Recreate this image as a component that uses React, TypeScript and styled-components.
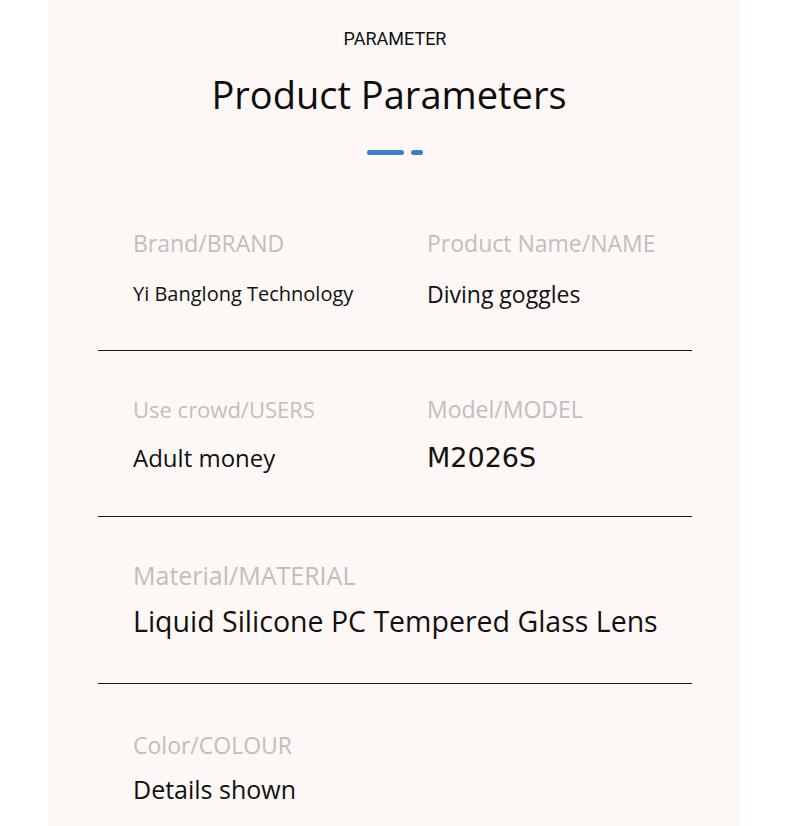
import React from 'react';
import styled, { createGlobalStyle } from 'styled-components';

const GlobalStyle = createGlobalStyle`
  html, body {
    margin: 0;
    padding: 0;
    background: #ffffff;
  }
  body {
    font-family: "Open Sans", "Noto Sans", sans-serif;
  }
`;

type Param = {
  label: string;
  value: string;
  labelSize: number;
  valueSize: number;
  mono?: boolean;
};

type Row = {
  items: Param[];
  height: number;
  labelTop: number;
  valueGap: number;
};

const rows: Row[] = [
  {
    items: [
      { label: 'Brand/BRAND', value: 'Yi Banglong Technology', labelSize: 23, valueSize: 20 },
      { label: 'Product Name/NAME', value: 'Diving goggles', labelSize: 23, valueSize: 23 },
    ],
    height: 196,
    labelTop: 75,
    valueGap: 23,
  },
  {
    items: [
      { label: 'Use crowd/USERS', value: 'Adult money', labelSize: 22, valueSize: 24 },
      { label: 'Model/MODEL', value: 'M2026S', labelSize: 23, valueSize: 27, mono: true },
    ],
    height: 166,
    labelTop: 45,
    valueGap: 21,
  },
  {
    items: [
      { label: 'Material/MATERIAL', value: 'Liquid Silicone PC Tempered Glass Lens', labelSize: 25, valueSize: 28.5 },
    ],
    height: 167,
    labelTop: 45,
    valueGap: 18,
  },
  {
    items: [{ label: 'Color/COLOUR', value: 'Details shown', labelSize: 23, valueSize: 25 }],
    height: 160,
    labelTop: 48,
    valueGap: 16,
  },
];

const Page = styled.div`
  padding: 0 50px 0 48px;
`;

const Panel = styled.div`
  background: #fdf8f6;
  min-height: 900px;
  padding: 28px 48px 0 50px;
`;

const Header = styled.div`
  display: flex;
  flex-direction: column;
  align-items: center;
`;

const Eyebrow = styled.div`
  font-family: "Roboto", sans-serif;
  font-size: 18px;
  color: #111;
  line-height: 22px;
`;

const Title = styled.h1`
  margin: 20px 12px 0 0;
  font-family: "Open Sans", sans-serif;
  font-weight: 400;
  font-size: 38px;
  line-height: 48px;
  color: #0c0c0c;
`;

const Accent = styled.div`
  display: flex;
  gap: 7px;
  margin-top: 32px;
`;

const Dash = styled.span<{ $w: number }>`
  width: ${p => p.$w}px;
  height: 5px;
  border-radius: 3px;
  background: #3a7fce;
`;

const RowBox = styled.div<{ $h: number; $top: number }>`
  display: grid;
  grid-template-columns: 294px 1fr;
  height: ${p => p.$h}px;
  padding: ${p => p.$top}px 0 0 35px;
  box-sizing: border-box;
  border-bottom: 1px solid #1a1a1a;

  &:last-child {
    border-bottom: none;
  }
`;

const Cell = styled.div<{ $span: boolean }>`
  grid-column: ${p => (p.$span ? '1 / -1' : 'auto')};
  display: flex;
  flex-direction: column;
`;

const Label = styled.div<{ $size: number }>`
  font-size: ${p => p.$size}px;
  line-height: 26px;
  color: #c2bebb;
  white-space: nowrap;
`;

const Value = styled.div<{ $size: number; $gap: number; $mono: boolean }>`
  margin-top: ${p => p.$gap}px;
  font-family: ${p => (p.$mono ? '"DejaVu Sans", sans-serif' : '"Open Sans", sans-serif')};
  font-size: ${p => p.$size}px;
  line-height: 30px;
  color: #111;
  white-space: nowrap;
`;

export default function App() {
  return (
    <>
      <GlobalStyle />
      <Page>
        <Panel>
          <Header>
            <Eyebrow>PARAMETER</Eyebrow>
            <Title>Product Parameters</Title>
            <Accent>
              <Dash $w={37} />
              <Dash $w={12} />
            </Accent>
          </Header>
          {rows.map((row, i) => (
            <RowBox key={i} $h={row.height} $top={row.labelTop}>
              {row.items.map(item => (
                <Cell key={item.label} $span={row.items.length === 1}>
                  <Label $size={item.labelSize}>{item.label}</Label>
                  <Value $size={item.valueSize} $gap={row.valueGap} $mono={!!item.mono}>
                    {item.value}
                  </Value>
                </Cell>
              ))}
            </RowBox>
          ))}
        </Panel>
      </Page>
    </>
  );
}
